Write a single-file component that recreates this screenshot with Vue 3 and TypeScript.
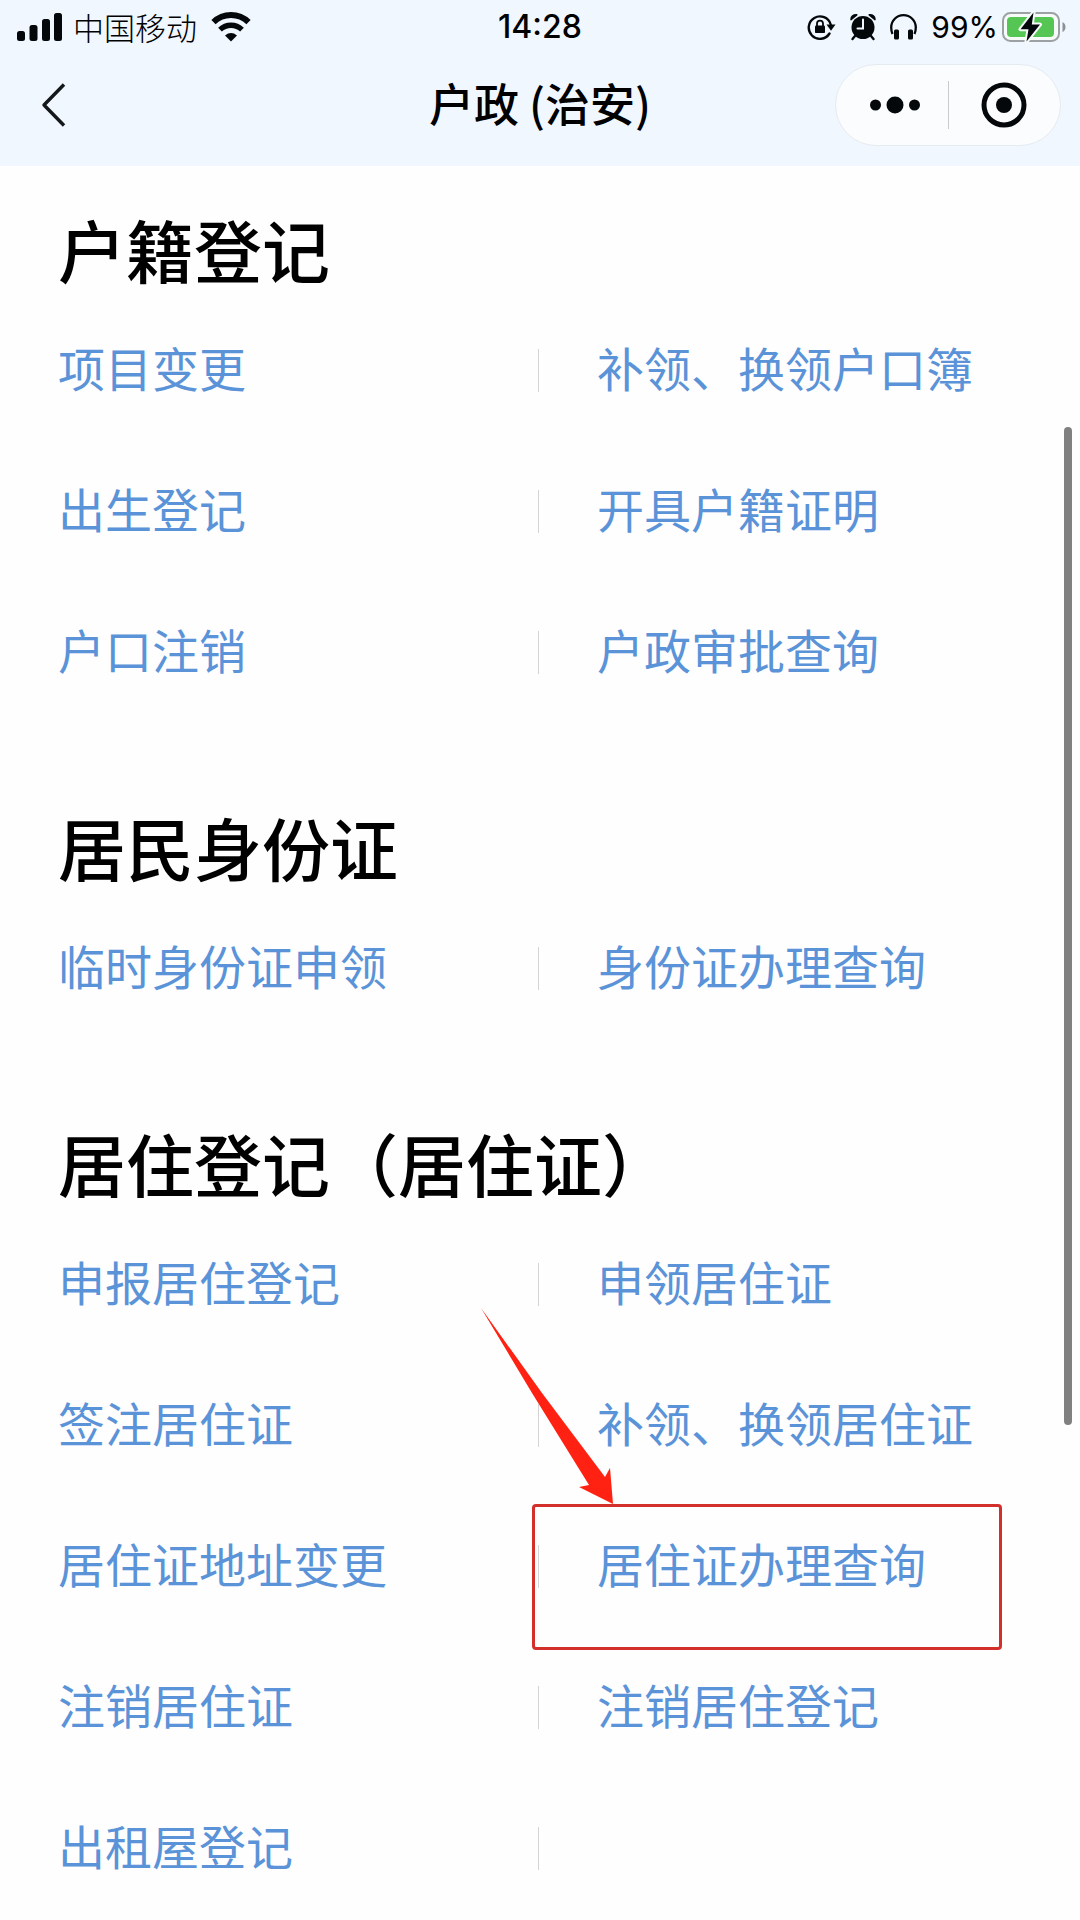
<script setup lang="ts">
interface Service {
  name: string
  marked?: boolean
}

interface Section {
  title: string
  services: Service[]
}

const sections: Section[] = [
  {
    title: '户籍登记',
    services: [
      { name: '项目变更' },
      { name: '补领、换领户口簿' },
      { name: '出生登记' },
      { name: '开具户籍证明' },
      { name: '户口注销' },
      { name: '户政审批查询' },
    ],
  },
  {
    title: '居民身份证',
    services: [{ name: '临时身份证申领' }, { name: '身份证办理查询' }],
  },
  {
    title: '居住登记（居住证）',
    services: [
      { name: '申报居住登记' },
      { name: '申领居住证' },
      { name: '签注居住证' },
      { name: '补领、换领居住证' },
      { name: '居住证地址变更' },
      { name: '居住证办理查询', marked: true },
      { name: '注销居住证' },
      { name: '注销居住登记' },
      { name: '出租屋登记' },
      { name: '' },
    ],
  },
]
</script>

<template>
  <div class="page">
    <header class="header">
      <div class="status">
        <div class="status-left">
          <svg class="signal" width="46" height="30" viewBox="0 0 46 30" aria-hidden="true">
            <rect x="0" y="19" width="8" height="10" rx="2.5" />
            <rect x="12.5" y="13" width="8" height="16" rx="2.5" />
            <rect x="25" y="7" width="8" height="22" rx="2.5" />
            <rect x="37" y="1" width="8" height="28" rx="2.5" />
          </svg>
          <span class="carrier">中国移动</span>
          <svg width="40" height="30" viewBox="0 0 40 30" aria-hidden="true">
            <g fill="none" stroke="#05080b">
              <path d="M2.5 10.2A25 25 0 0 1 37.5 10.2" stroke-width="6" />
              <path d="M9 17.6A16 16 0 0 1 31 17.6" stroke-width="5.4" />
            </g>
            <path d="M14 23.4Q20 18.8 26 23.4L20 29.6Z" />
          </svg>
        </div>
        <time class="clock">14:28</time>
        <div class="status-right">
          <svg width="29" height="28" viewBox="0 0 29 28" aria-hidden="true">
            <path d="M22.5 20.5A11.2 11.2 0 1 1 23.7 11.5" fill="none" stroke="#05080b" stroke-width="2.4" stroke-linecap="round" />
            <path d="M19.5 11.5H28.5L24 17.8Z" />
            <rect x="8" y="12.5" width="10" height="7.6" rx="1.2" />
            <path d="M10 13V10.6A3 3 0 0 1 16 10.6V13" fill="none" stroke="#05080b" stroke-width="1.8" />
          </svg>
          <svg width="26" height="28" viewBox="0 0 26 28" aria-hidden="true">
            <circle cx="13" cy="14.5" r="11.5" />
            <path d="M1 6.6Q1.2 1.6 6.8 1.8Z" stroke="#05080b" stroke-linejoin="round" stroke-width="1.5" />
            <path d="M25 6.6Q24.8 1.6 19.2 1.8Z" stroke="#05080b" stroke-linejoin="round" stroke-width="1.5" />
            <path d="M5 23L2.5 26M21 23L23.5 26" stroke="#05080b" stroke-width="2.4" stroke-linecap="round" />
            <path d="M13 6.5V15.5H7.5" fill="none" stroke="#f0f7ff" stroke-width="2" stroke-linecap="round" />
          </svg>
          <svg width="27" height="28" viewBox="0 0 27 28" aria-hidden="true">
            <path d="M2.5 21C1.4 18.5 1.2 16.5 1.2 14.5A12.3 12.3 0 0 1 25.8 14.5C25.8 16.5 25.6 18.5 24.5 21" fill="none" stroke="#05080b" stroke-width="2.3" />
            <rect x="4" y="16.5" width="5" height="10" rx="1.5" />
            <rect x="18" y="16.5" width="5" height="10" rx="1.5" />
          </svg>
          <span class="percent">99%</span>
          <svg class="battery" width="64" height="32" viewBox="0 0 64 32" aria-hidden="true">
            <rect x="1" y="2" width="56" height="28" rx="7.5" fill="#f6fbf9" stroke="#9ca1a3" stroke-width="2" />
            <rect x="5" y="6" width="47" height="20" rx="4" fill="#55c653" />
            <path d="M60.5 11Q63.5 12.5 63.5 16T60.5 21Z" fill="#8d9194" />
            <path d="M31.5 1.5L18.5 18.2H26.5L24.5 30.5L38 13.5H29.8Z" stroke="#f6fbf9" stroke-width="4" stroke-linejoin="round" paint-order="stroke" />
          </svg>
        </div>
      </div>

      <div class="nav">
        <button class="back" type="button" aria-label="返回">
          <svg width="26" height="46" viewBox="0 0 26 46" aria-hidden="true">
            <path d="M23 2.5L3 23L23 43.5" fill="none" stroke="#14181b" stroke-width="3.4" stroke-linejoin="round" />
          </svg>
        </button>
        <h1 class="title">户政 (治安)</h1>
        <div class="capsule">
          <button class="capsule-button" type="button" aria-label="更多">
            <svg class="dots" width="50" height="18" viewBox="0 0 50 18" aria-hidden="true">
              <circle cx="5.5" cy="9" r="5.5" />
              <circle cx="25" cy="9" r="8.5" />
              <circle cx="44.5" cy="9" r="5.5" />
            </svg>
          </button>
          <span class="capsule-line"></span>
          <button class="capsule-button" type="button" aria-label="关闭">
            <svg width="46" height="46" viewBox="0 0 46 46" aria-hidden="true">
              <circle cx="23" cy="23" r="20" fill="none" stroke="#05080b" stroke-width="5" />
              <circle cx="23" cy="23" r="8" />
            </svg>
          </button>
        </div>
      </div>
    </header>

    <main class="content">
      <section v-for="section in sections" :key="section.title">
        <h2 class="heading">{{ section.title }}</h2>
        <ul class="grid">
          <li v-for="service in section.services" :key="service.name" class="cell">
            <a v-if="service.name" class="link" href="#">{{ service.name }}</a>
            <template v-if="service.marked">
              <span class="marker"></span>
              <svg class="arrow" width="134" height="198" viewBox="0 0 134 198" aria-hidden="true">
                <path d="M1 1L62 86L125 170L130 161L133 197L99 180L109 178L52 86Z" fill="#ff2212" />
              </svg>
            </template>
          </li>
        </ul>
      </section>
    </main>

    <div class="scrollbar"></div>
  </div>
</template>

<style>
body {
  background: #fefefe;
}
</style>

<style scoped>
.page {
  position: relative;
  font-family: "Noto Sans CJK SC", sans-serif;
  color: #000;
  background: #fefefe;
}

svg {
  display: block;
  flex: none;
  fill: #05080b;
}

button {
  display: flex;
  align-items: center;
  justify-content: center;
  padding: 0;
  border: 0;
  background: none;
}

.header {
  padding-bottom: 10px;
  background: #f0f7ff;
}

.status,
.nav {
  display: grid;
  grid-template-columns: 1fr auto 1fr;
  align-items: center;
}

.status {
  height: 54px;
  padding: 0 14px;
}

.status-left,
.status-right {
  display: flex;
  align-items: center;
}

.signal {
  margin: 0 10px 0 3px;
}

.carrier {
  margin-right: 14px;
  font-size: 31px;
  font-weight: 300;
  line-height: 38px;
}

.clock,
.percent {
  font-family: Inter, sans-serif;
  line-height: 40px;
}

.clock {
  font-size: 32px;
  font-weight: 500;
}

.percent {
  font-size: 30px;
}

.status-right {
  justify-content: flex-end;
  gap: 14px;
}

.battery {
  margin-left: -10px;
}

.nav {
  height: 102px;
  padding: 0 19px;
}

.back {
  justify-self: start;
  margin-left: 22px;
}

.title {
  margin: 0;
  padding-bottom: 4px;
  font-size: 45px;
  font-weight: 500;
  line-height: 60px;
}

.capsule {
  display: flex;
  align-items: center;
  justify-self: end;
  box-sizing: border-box;
  width: 226px;
  height: 82px;
  border: 1px solid #e6ebf0;
  border-radius: 41px;
  background: #fbfcfe;
}

.capsule-button {
  flex: 1;
  height: 80px;
}

.dots {
  margin-left: 6px;
}

.capsule-line {
  width: 1px;
  height: 48px;
  background: #c9ccce;
}

.content {
  padding: 47px 0 48px;
}

section + section {
  margin-top: 137px;
}

.heading {
  margin: 0 0 64px;
  padding-left: 58px;
  font-size: 68px;
  font-weight: 500;
  line-height: 72px;
}

.grid {
  display: grid;
  grid-template-columns: 1fr 1fr;
  row-gap: 98px;
  margin: 0;
  padding: 0;
  list-style: none;
}

.cell {
  position: relative;
  height: 43px;
  padding-left: 58px;
}

.cell:nth-child(even) {
  margin-left: -2px;
  border-left: 1px solid #d4d4d4;
}

.link {
  display: block;
  color: #5b93d8;
  font-size: 47px;
  line-height: 36px;
  text-decoration: none;
  white-space: nowrap;
}

.marker {
  position: absolute;
  top: -41px;
  left: -7px;
  box-sizing: border-box;
  width: 470px;
  height: 146px;
  border: 3px solid #d4302b;
  border-radius: 4px;
  pointer-events: none;
}

.arrow {
  position: absolute;
  top: -238px;
  left: -59px;
  pointer-events: none;
}

.scrollbar {
  position: absolute;
  top: 427px;
  right: 8px;
  width: 8px;
  height: 998px;
  border-radius: 4px;
  background: #808080;
}
</style>
